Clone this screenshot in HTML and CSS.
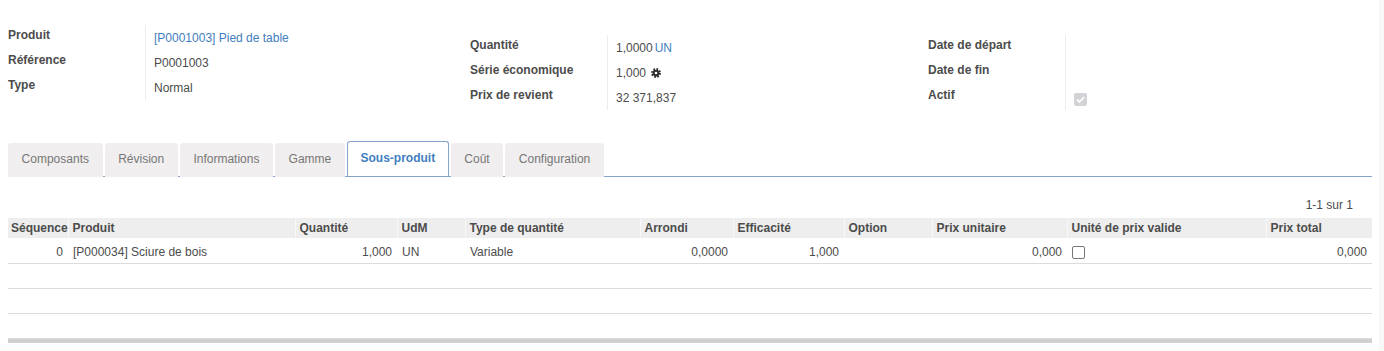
FILE: index.html
```html
<!DOCTYPE html>
<html>

<head>
  <meta charset="utf-8">
  <meta name="viewport" content="width=device-width">
  <title>Nomenclature - P0001003</title>

  <link rel="stylesheet" href="styles.css">
</head>

<body>
  <div class="sheet">

    <div class="head">
      <div class="group">
        <div class="field">
          <span class="field__label">Produit</span>
          <span class="field__value"><a class="link" href="#">[P0001003] Pied de table</a></span>
        </div>
        <div class="field">
          <span class="field__label">Référence</span>
          <span class="field__value">P0001003</span>
        </div>
        <div class="field">
          <span class="field__label">Type</span>
          <span class="field__value">Normal</span>
        </div>
      </div>

      <div class="group group--low">
        <div class="field">
          <span class="field__label">Quantité</span>
          <span class="field__value">1,0000<a class="link" href="#">UN</a></span>
        </div>
        <div class="field">
          <span class="field__label">Série économique</span>
          <span class="field__value">1,000
            <svg class="gear" viewBox="0 0 16 16">
              <circle cx="8" cy="8" r="6.2" fill="none" stroke="#2b2b2b" stroke-width="3.4" stroke-dasharray="2.6 2.27"/>
              <circle cx="8" cy="8" r="5.4" fill="#2b2b2b"/>
              <circle cx="8" cy="8" r="2.1" fill="#fff"/>
            </svg>
          </span>
        </div>
        <div class="field">
          <span class="field__label">Prix de revient</span>
          <span class="field__value">32 371,837</span>
        </div>
      </div>

      <div class="group group--low">
        <div class="field">
          <span class="field__label">Date de départ</span>
          <span class="field__value"></span>
        </div>
        <div class="field">
          <span class="field__label">Date de fin</span>
          <span class="field__value"></span>
        </div>
        <div class="field">
          <span class="field__label">Actif</span>
          <span class="field__value">
            <span class="check check--disabled">
              <svg viewBox="0 0 12 12"><path d="M2.8 6.2 L5 8.3 L9.3 3.8" fill="none" stroke="#fff" stroke-width="1.6"/></svg>
            </span>
          </span>
        </div>
      </div>
    </div>

    <ul class="tabs">
      <li class="tab">Composants</li>
      <li class="tab">Révision</li>
      <li class="tab">Informations</li>
      <li class="tab">Gamme</li>
      <li class="tab tab--active">Sous-produit</li>
      <li class="tab">Coût</li>
      <li class="tab">Configuration</li>
    </ul>

    <div class="pager">1-1 sur 1</div>

    <table class="list">
      <colgroup>
        <col style="width: 60px">
        <col style="width: 227px">
        <col style="width: 102px">
        <col style="width: 68px">
        <col style="width: 175px">
        <col style="width: 93px">
        <col style="width: 111px">
        <col style="width: 88px">
        <col style="width: 135px">
        <col style="width: 199px">
        <col style="width: 106px">
      </colgroup>
      <thead>
        <tr>
          <th>Séquence</th>
          <th>Produit</th>
          <th>Quantité</th>
          <th>UdM</th>
          <th>Type de quantité</th>
          <th>Arrondi</th>
          <th>Efficacité</th>
          <th>Option</th>
          <th>Prix unitaire</th>
          <th>Unité de prix valide</th>
          <th>Prix total</th>
        </tr>
      </thead>
      <tbody>
        <tr>
          <td class="num">0</td>
          <td>[P000034] Sciure de bois</td>
          <td class="num">1,000</td>
          <td>UN</td>
          <td>Variable</td>
          <td class="num">0,0000</td>
          <td class="num">1,000</td>
          <td></td>
          <td class="num">0,000</td>
          <td><span class="check"></span></td>
          <td class="num">0,000</td>
        </tr>
        <tr class="empty"><td colspan="11"></td></tr>
        <tr class="empty"><td colspan="11"></td></tr>
        <tr class="empty"><td colspan="11"></td></tr>
      </tbody>
      <tfoot>
        <tr><td colspan="11"></td></tr>
      </tfoot>
    </table>

  </div>
</body>

</html>
```

FILE: styles.css
```css
:root {
  --color-text: #4c4c4c;
  --color-link: #3f7ec0;
  --color-tab-line: #86a3cd;
  --color-rule: #dcdcdc;
}

html {
  background-color: #f8f8f8;
}

body {
  margin: 0;
  font-family: 'Liberation Sans', Arial, sans-serif;
  font-size: 12px;
  color: var(--color-text);
}

.sheet {
  width: 1379px;
  min-height: 351px;
  box-sizing: border-box;
  padding: 25px 7px 0 8px;
  background-color: #fff;
}

.link {
  color: var(--color-link);
  text-decoration: none;
}

/* header fields */

.head {
  display: grid;
  grid-template-columns: 462px 458px 1fr;
}

.group--low {
  margin-top: 10px;
}

.field {
  display: flex;
  height: 25px;
}

.field__label {
  width: 137px;
  flex: none;
  font-weight: 700;
  line-height: 21px;
}

.field__value {
  display: flex;
  align-items: center;
  gap: 2px;
  height: 25px;
  padding: 0 0 0 8px;
  border-left: 1px solid #ececec;
  line-height: 24px;
  align-self: stretch;
}

.gear {
  width: 10px;
  height: 10px;
  margin-left: 3px;
}

.check {
  display: inline-block;
  box-sizing: border-box;
  width: 13px;
  height: 13px;
  border: 1.5px solid #777;
  border-radius: 2px;
  vertical-align: middle;
}

.check--disabled {
  margin-top: 4px;
  border: none;
  background-color: #d3d3d7;
}

.check svg {
  display: block;
  width: 13px;
  height: 13px;
}

/* tabs */

.tabs {
  display: flex;
  gap: 2px;
  margin: 33px 0 0;
  padding: 0;
  list-style: none;
  border-bottom: 1px solid var(--color-tab-line);
}

.tab {
  height: 33px;
  margin-bottom: -1px;
  padding: 0 12.6px;
  border: 1px solid transparent;
  border-bottom: none;
  border-radius: 3px 3px 0 0;
  background-color: #f0eeee;
  color: #777;
  line-height: 30px;
}

.tab--active {
  height: 34px;
  margin-top: -2px;
  line-height: 32px;
  border-color: var(--color-tab-line);
  background-color: #fff;
  color: var(--color-link);
  font-weight: 700;
}

/* list */

.pager {
  margin-top: 17px;
  padding-right: 19px;
  line-height: 22px;
  text-align: right;
}

.list {
  width: 1364px;
  margin-top: 2px;
  border-collapse: collapse;
  table-layout: fixed;
}

.list th {
  height: 20px;
  padding: 0 4px;
  border-left: 1px solid #f8f8f8;
  background-color: #eeeeee;
  font-weight: 700;
  text-align: left;
  white-space: nowrap;
}

.list th:first-child {
  padding-left: 3px;
  border-left: none;
}

.list td {
  box-sizing: border-box;
  height: 25px;
  padding: 4px 5px 0 5px;
  border-bottom: 1px solid var(--color-rule);
  white-space: nowrap;
}

.list .num {
  text-align: right;
}

.list tfoot td {
  height: 5px;
  padding: 0;
  border-bottom: none;
  background-color: #d0d0d0;
}
```
